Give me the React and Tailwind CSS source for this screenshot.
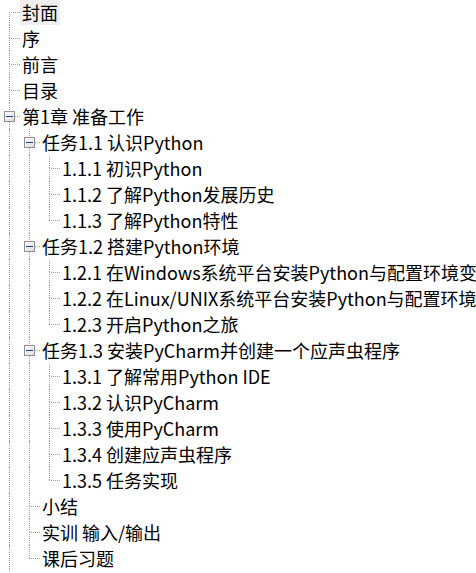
import React from "react";

const tree = [
  { label: "封面", selected: true },
  { label: "序" },
  { label: "前言" },
  { label: "目录" },
  {
    label: "第1章 准备工作",
    more: true,
    children: [
      {
        label: "任务1.1 认识Python",
        children: [
          { label: "1.1.1 初识Python" },
          { label: "1.1.2 了解Python发展历史" },
          { label: "1.1.3 了解Python特性" },
        ],
      },
      {
        label: "任务1.2 搭建Python环境",
        children: [
          { label: "1.2.1 在Windows系统平台安装Python与配置环境变量" },
          { label: "1.2.2 在Linux/UNIX系统平台安装Python与配置环境变量" },
          { label: "1.2.3 开启Python之旅" },
        ],
      },
      {
        label: "任务1.3 安装PyCharm并创建一个应声虫程序",
        children: [
          { label: "1.3.1 了解常用Python IDE" },
          { label: "1.3.2 认识PyCharm" },
          { label: "1.3.3 使用PyCharm" },
          { label: "1.3.4 创建应声虫程序" },
          { label: "1.3.5 任务实现" },
        ],
      },
      { label: "小结" },
      { label: "实训 输入/输出" },
      { label: "课后习题" },
    ],
  },
];

// flatten the tree into rows with the guide lines each row needs
const flatten = (nodes, guides = [], root = true, out = []) => {
  nodes.forEach((node, i) => {
    const last = i === nodes.length - 1 && !node.more;
    out.push({
      ...node,
      guides,
      first: root && i === 0,
      last,
    });
    if (node.children) {
      flatten(node.children, [...guides, !last], false, out);
    }
  });
  return out;
};

const rows = flatten(tree);

const Toggle = () => (
  <div className="absolute left-[4px] top-[8px] flex h-[11px] w-[11px] items-center justify-center border border-[#919191] bg-gradient-to-br from-white to-[#dcdcdc]">
    <div className="h-[1px] w-[7px] bg-[#1e3f8f]" />
  </div>
);

const Row = ({ row }) => (
  <div className="flex h-[26px] items-stretch whitespace-nowrap">
    {row.guides.map((g, i) => (
      <div key={i} className="w-5 shrink-0">
        {g && <div className="ml-[9px] h-full border-l border-dotted border-[#a0a0a0]" />}
      </div>
    ))}
    <div className="relative flex w-5 shrink-0 flex-col">
      <div
        className={`ml-[9px] h-[13px] ${row.first ? "" : "border-l border-dotted border-[#a0a0a0]"}`}
      />
      <div
        className={`ml-[9px] h-[13px] w-[11px] border-t border-dotted border-[#a0a0a0] ${row.last ? "" : "border-l"}`}
      />
      {row.children && <Toggle />}
    </div>
    <span
      className={`px-[2px] text-[18px] leading-[26px] text-black ${row.selected ? "bg-[#efefef]" : ""}`}
    >
      {row.label}
    </span>
  </div>
);

const App = () => {
  return (
    <div
      className="h-[573px] w-[476px] overflow-hidden bg-white"
      style={{ fontFamily: '"Noto Sans CJK SC", "Noto Sans", sans-serif' }}
    >
      <div className="-mt-[1px]">
        {rows.map((row, i) => (
          <Row key={i} row={row} />
        ))}
      </div>
    </div>
  );
};

export default App;
